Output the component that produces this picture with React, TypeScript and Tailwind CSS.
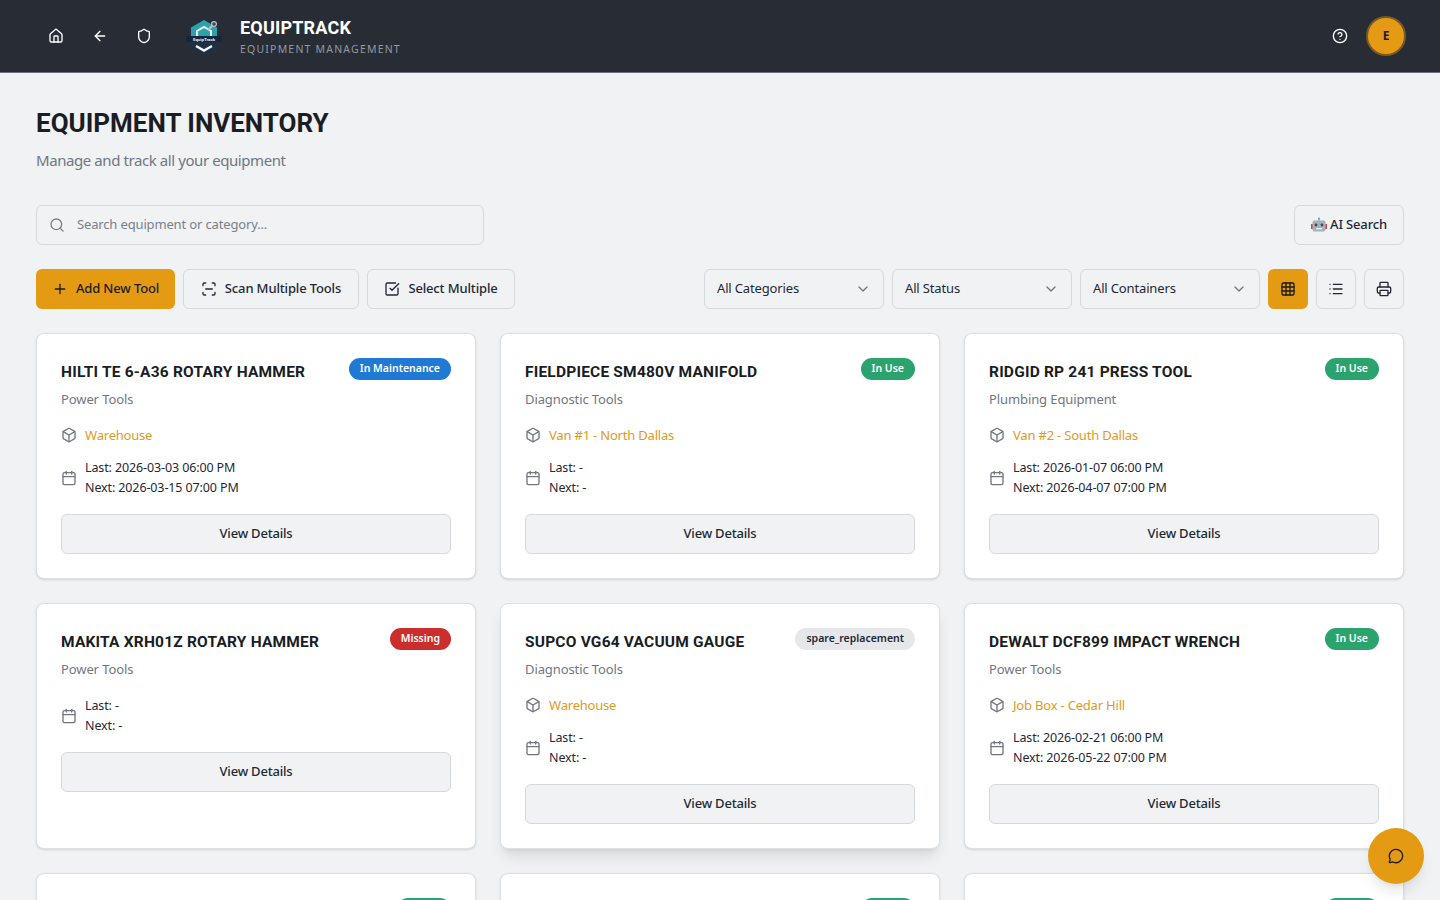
import { ArrowLeft, Box, Calendar, ChevronDown, CircleHelp, Grid3x3, House, List, MessageCircle, Plus, Printer, ScanLine, Search, Shield, SquareCheckBig } from "lucide-react";

const body = "font-['Noto_Sans',sans-serif]";
const heading = "font-['Roboto',sans-serif]";

type Tool = {
  name: string;
  category: string;
  status: string;
  location?: string;
  last: string;
  next: string;
  hover?: boolean;
};

const tools: Tool[] = [
  { name: "Hilti TE 6-A36 Rotary Hammer", category: "Power Tools", status: "In Maintenance", location: "Warehouse", last: "2026-03-03 06:00 PM", next: "2026-03-15 07:00 PM" },
  { name: "Fieldpiece SM480V Manifold", category: "Diagnostic Tools", status: "In Use", location: "Van #1 - North Dallas", last: "-", next: "-" },
  { name: "Ridgid RP 241 Press Tool", category: "Plumbing Equipment", status: "In Use", location: "Van #2 - South Dallas", last: "2026-01-07 06:00 PM", next: "2026-04-07 07:00 PM" },
  { name: "Makita XRH01Z Rotary Hammer", category: "Power Tools", status: "Missing", last: "-", next: "-" },
  { name: "Supco VG64 Vacuum Gauge", category: "Diagnostic Tools", status: "spare_replacement", location: "Warehouse", last: "-", next: "-", hover: true },
  { name: "DeWalt DCF899 Impact Wrench", category: "Power Tools", status: "In Use", location: "Job Box - Cedar Hill", last: "2026-02-21 06:00 PM", next: "2026-05-22 07:00 PM" },
  { name: "Milwaukee 2767-20 Impact Wrench", category: "Power Tools", status: "In Use", location: "Warehouse", last: "-", next: "-" },
  { name: "Fluke 87V Multimeter", category: "Diagnostic Tools", status: "In Use", location: "Warehouse", last: "-", next: "-" },
  { name: "Bosch GLM 50 Laser Measure", category: "Power Tools", status: "In Use", location: "Warehouse", last: "-", next: "-" },
];

const badgeStyles: Record<string, string> = {
  "In Maintenance": "bg-[#2079d4] text-white",
  "In Use": "bg-[#2ba36c] text-white",
  Missing: "bg-[#cc2e2e] text-white",
  spare_replacement: "bg-[#e5e7eb] text-[#1f2937]",
};

function Logo() {
  return (
    <svg width="36" height="40" viewBox="0 0 36 40" className="shrink-0 mt-[4px]">
      <path d="M18 1 L32 9 V30 L18 39 L4 30 V9 Z" fill="#1d3044" />
      <path d="M18 2 L31 9.5 V20 H5 V9.5 Z" fill="#2ba3ad" />
      <path d="M11 19 V13 L18 9 L25 13 V19" fill="none" stroke="#e8eef2" strokeWidth="2" />
      <path d="M22 12 L28 6" stroke="#b8c2cc" strokeWidth="2" />
      <circle cx="28" cy="6" r="2.4" fill="#3d4a57" stroke="#b8c2cc" strokeWidth="1.2" />
      <rect x="0" y="18" width="36" height="6" rx="1" fill="#16263c" />
      <text x="18" y="22.6" textAnchor="middle" fontSize="4.4" fontWeight="700" fill="#e8eef2" fontFamily="Roboto, sans-serif">EquipTrack</text>
      <path d="M10 28 L18 32.5 L26 28" fill="none" stroke="#f3f5f7" strokeWidth="2.4" />
    </svg>
  );
}

function Robot() {
  return (
    <svg width="16" height="16" viewBox="0 0 16 16" className="shrink-0">
      <rect x="0" y="7" width="2" height="5" fill="#c8474c" />
      <rect x="14" y="7" width="2" height="5" fill="#c8474c" />
      <rect x="7.4" y="1" width="1.2" height="3" fill="#8a99a6" />
      <circle cx="8" cy="1.5" r="1" fill="#8a99a6" />
      <rect x="1.5" y="3.5" width="13" height="11" rx="2" fill="#a3b2bd" />
      <circle cx="5" cy="8" r="1.4" fill="#3f4c57" />
      <circle cx="11" cy="8" r="1.4" fill="#3f4c57" />
      <rect x="5" y="11" width="6" height="1.4" fill="#e9edf0" />
    </svg>
  );
}

function Card({ tool }: { tool: Tool }) {
  return (
    <div className={`bg-white rounded-lg border border-[#dcdfe3] p-6 flex flex-col ${tool.hover ? "shadow-lg" : "shadow-sm"}`}>
      <div className="flex items-start justify-between gap-2">
        <h3 className={`${heading} text-[15.5px] leading-[26px] mt-[1px] font-bold uppercase tracking-[0.2px] text-[#1a1d23]`}>{tool.name}</h3>
        <span className={`rounded-full px-[11px] h-[22px] pb-[1px] flex items-center text-[10.5px] font-semibold whitespace-nowrap ${badgeStyles[tool.status]}`}>
          {tool.status}
        </span>
      </div>
      <p className="mt-[4px] text-[13px] leading-5 tracking-[-0.1px] text-[#6f7783]">{tool.category}</p>
      {tool.location && (
        <div className="mt-[16px] flex items-center gap-2 text-[13px] leading-5 tracking-[-0.2px] text-[#e29a1c]">
          <Box size={16} className="text-[#6f7783]" />
          <span>{tool.location}</span>
        </div>
      )}
      <div className={`${tool.location ? "mt-[13px]" : "mt-[17px]"} flex items-center gap-2 text-[12.5px] leading-5 tracking-[-0.12px] text-[#1f2937]`}>
        <Calendar size={16} className="text-[#6f7783]" />
        <div>
          <p>Last: {tool.last}</p>
          <p>Next: {tool.next}</p>
        </div>
      </div>
      <button className="mt-4 h-10 w-full rounded-md border border-[#d5d8dc] bg-[#f0f2f4] text-[13px] tracking-[-0.2px] font-medium text-[#1f2937]">
        View Details
      </button>
    </div>
  );
}

function Dropdown({ label }: { label: string }) {
  return (
    <div className="w-[180px] h-10 rounded-md border border-[#d5d8dc] px-3 flex items-center justify-between text-[13px] tracking-[-0.15px] text-[#1f2937]">
      <span>{label}</span>
      <ChevronDown size={16} className="text-[#6f7783]" />
    </div>
  );
}

export default function App() {
  return (
    <div className={`${body} h-screen overflow-hidden bg-[#f0f2f4]`}>
      {/* Header */}
      <header className="h-[73px] bg-[#282d35] border-b border-[#6b7078] flex items-center justify-between pl-9 pr-[34px]">
        <div className="flex items-center">
          <div className="flex items-center gap-1 text-white">
            <button className="w-10 h-10 flex items-center justify-center"><House size={16} /></button>
            <button className="w-10 h-10 flex items-center justify-center"><ArrowLeft size={16} /></button>
            <button className="w-10 h-10 flex items-center justify-center"><Shield size={16} /></button>
          </div>
          <div className="ml-[22px] flex items-center gap-[18px]">
            <Logo />
            <div>
              <p className={`${heading} text-[18px] leading-6 font-bold tracking-[0.2px] text-white`}>EQUIPTRACK</p>
              <p className="text-[10.5px] leading-4 tracking-[1.2px] text-[#9298a2] mt-[1px]">EQUIPMENT MANAGEMENT</p>
            </div>
          </div>
        </div>
        <div className="flex items-center gap-[18px]">
          <CircleHelp size={16} className="text-white" />
          <div className="w-9 h-9 m-[2px] rounded-full bg-[#e49b13] ring-2 ring-[#7a5a22] flex items-center justify-center text-[12px] font-bold text-[#1a1d23]">
            E
          </div>
        </div>
      </header>

      <main className="px-9 pt-[32px]">
        <h1 className={`${heading} text-[26px] leading-9 font-bold text-[#1a1d23]`}>EQUIPMENT INVENTORY</h1>
        <p className="mt-[7px] text-[15px] leading-6 tracking-[-0.42px] text-[#6f7783]">Manage and track all your equipment</p>

        {/* Search */}
        <div className="mt-[33px] flex items-center justify-between">
          <div className="w-[448px] h-10 rounded-md border border-[#d5d8dc] px-3 flex items-center gap-[12px] text-[13px] tracking-[-0.15px] text-[#7a818c]">
            <Search size={16} />
            <span>Search equipment or category...</span>
          </div>
          <button className="w-[110px] h-10 rounded-md border border-[#d5d8dc] flex items-center justify-center gap-[3px] text-[13px] tracking-[-0.15px] font-medium text-[#1f2937]">
            <Robot />
            AI Search
          </button>
        </div>

        {/* Toolbar */}
        <div className="mt-6 flex items-center justify-between">
          <div className="flex items-center gap-2 text-[13px] tracking-[-0.15px] font-medium text-[#1f2937]">
            <button className="w-[139px] h-10 rounded-md bg-[#e49b13] flex items-center justify-center gap-2 text-[#1a1d23]">
              <Plus size={16} />
              Add New Tool
            </button>
            <button className="w-[176px] h-10 rounded-md border border-[#d5d8dc] flex items-center justify-center gap-2">
              <ScanLine size={16} />
              Scan Multiple Tools
            </button>
            <button className="w-[148px] h-10 rounded-md border border-[#d5d8dc] flex items-center justify-center gap-2">
              <SquareCheckBig size={16} />
              Select Multiple
            </button>
          </div>
          <div className="flex items-center gap-2">
            <Dropdown label="All Categories" />
            <Dropdown label="All Status" />
            <Dropdown label="All Containers" />
            <button className="w-10 h-10 rounded-md bg-[#e49b13] flex items-center justify-center text-[#1a1d23]"><Grid3x3 size={16} /></button>
            <button className="w-10 h-10 rounded-md border border-[#d5d8dc] flex items-center justify-center text-[#1f2937]"><List size={16} /></button>
            <button className="w-10 h-10 rounded-md border border-[#d5d8dc] flex items-center justify-center text-[#1f2937]"><Printer size={16} /></button>
          </div>
        </div>

        {/* Cards */}
        <div className="mt-6 grid grid-cols-3 gap-6">
          {tools.map((tool) => (
            <Card key={tool.name} tool={tool} />
          ))}
        </div>
      </main>

      {/* Chat */}
      <button className="fixed right-4 bottom-4 w-14 h-14 rounded-full bg-[#e49b13] shadow-lg flex items-center justify-center text-[#1a1d23]">
        <MessageCircle size={16} />
      </button>
    </div>
  );
}
